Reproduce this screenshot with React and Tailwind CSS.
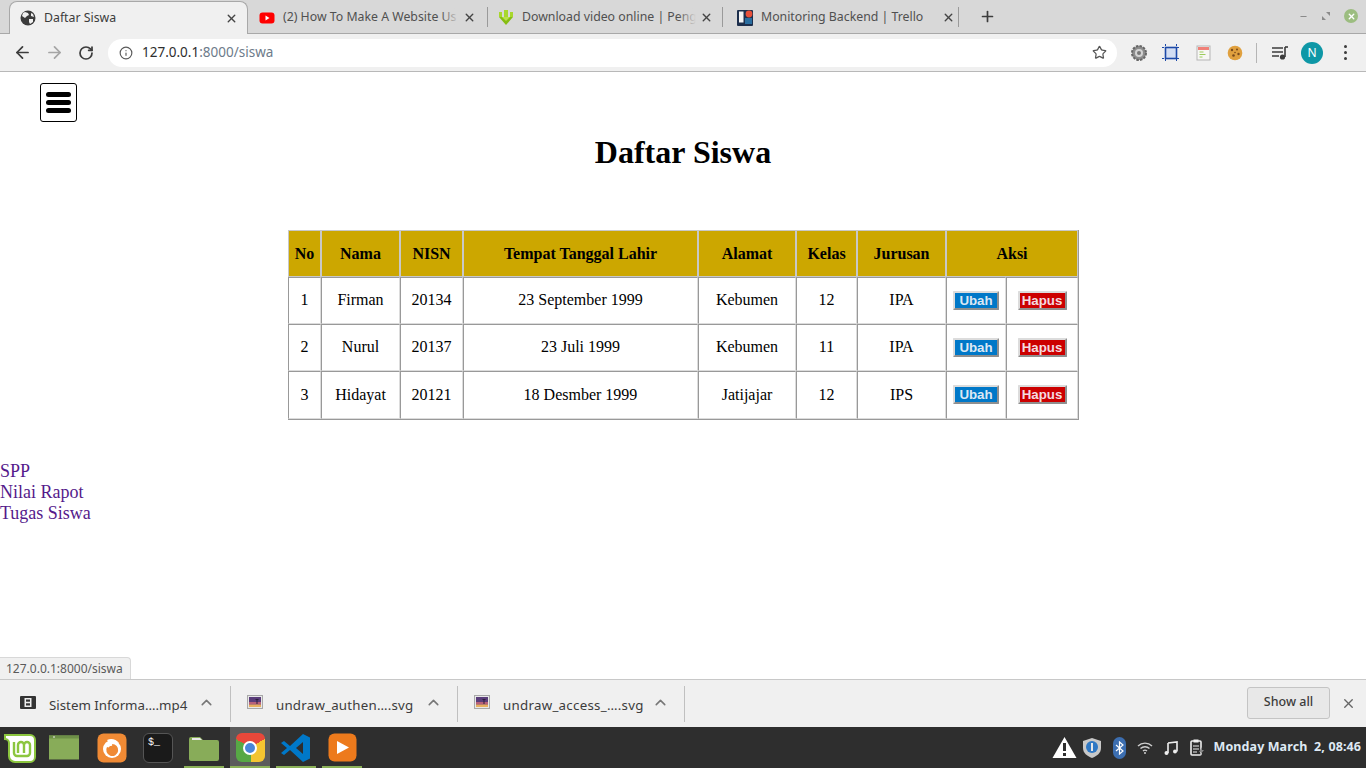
import { ArrowLeft, ArrowRight, RotateCw, Info, Star, Plus, X, ChevronUp, Minus } from 'lucide-react';

const ui = "font-['Noto_Sans','Open_Sans',sans-serif]";

const rows = [
  { no: 1, nama: 'Firman', nisn: '20134', ttl: '23 September 1999', alamat: 'Kebumen', kelas: 12, jurusan: 'IPA' },
  { no: 2, nama: 'Nurul', nisn: '20137', ttl: '23 Juli 1999', alamat: 'Kebumen', kelas: 11, jurusan: 'IPA' },
  { no: 3, nama: 'Hidayat', nisn: '20121', ttl: '18 Desmber 1999', alamat: 'Jatijajar', kelas: 12, jurusan: 'IPS' },
];

const th = 'border-l border-t border-r border-b border-[#c8c8c8] bg-[#cca700] font-bold text-center p-0';
const td = 'border-l border-t border-[#999999] border-r border-r-[#dcdcdc] border-b border-b-[#dcdcdc] text-center p-0';

function Globe() {
  return (
    <svg width="16" height="16" viewBox="0 0 16 16">
      <circle cx="8" cy="8" r="7.5" fill="#3c3c3c" />
      <path d="M5 2l3 1 1 2-2 1-2 2-3-2 1-3zM9 9l4 0 0 3-3 2-1-2zM11 3l2 1 1 3-3-1z" fill="#f0f0f0" />
    </svg>
  );
}

function YouTube() {
  return (
    <svg width="16" height="12" viewBox="0 0 16 12">
      <rect width="15" height="11" x="0.5" y="0.5" rx="3" fill="#f00" />
      <path d="M6.5 3.5l4 2.5-4 2.5z" fill="#fff" />
    </svg>
  );
}

function GreenArrow() {
  return (
    <svg width="16" height="16" viewBox="0 0 16 16">
      <path d="M1 7h14l-7 8z" fill="#86bd12" />
      <path d="M1 2h3v5H1zM6 0h4v8H6zM12 2h3v5h-3z" fill="#a8d72c" />
      <path d="M4 7h8l-4 4z" fill="#b9e24a" />
    </svg>
  );
}

function TrelloFav() {
  return (
    <svg width="16" height="16" viewBox="0 0 16 16">
      <rect width="16" height="16" rx="1" fill="#1d2f4d" />
      <rect x="2" y="1.500" width="4.500" height="11" fill="#f4f4f4" />
      <rect x="8" y="8" width="7" height="6" fill="#2a6ea0" />
      <circle cx="12" cy="4" r="3.400" fill="#e8503a" />
    </svg>
  );
}

function Tab({ icon, title, active, box, fade }) {
  return (
    <div
      className={`relative flex items-center shrink-0 h-[33px] ${box} ${
        active ? 'bg-[#f0f0f0] rounded-t-[8px] border border-b-0 border-[#a8a8a8] -mb-px z-10' : 'pt-[2px]'
      }`}
    >
      <span className="flex w-[16px] justify-center shrink-0">{icon}</span>
      <span
        className={`relative ml-[8px] flex-1 overflow-hidden whitespace-nowrap text-[12.3px] ${
          active ? 'text-[#3c3c3c]' : 'text-[#505050]'
        }`}
      >
        {title}
        {fade && <span className="absolute inset-y-0 right-0 w-[18px] bg-gradient-to-r from-transparent to-[#d8d8d8]" />}
      </span>
      <X size={13} strokeWidth={2.6} className="shrink-0 ml-[4px] text-[#444]" />
    </div>
  );
}

function Extensions() {
  return (
    <div className="flex items-center">
      <svg width="18" height="18" viewBox="0 0 18 18">
        <circle cx="9" cy="9" r="7" fill="#8d8d8d" stroke="#666" strokeWidth="2" strokeDasharray="2.5 1.2" />
        <circle cx="9" cy="9" r="4" fill="#d4d4d4" />
        <circle cx="9" cy="9" r="2" fill="#777" />
      </svg>
      <svg className="ml-[14px]" width="18" height="18" viewBox="0 0 18 18">
        <rect x="3.500" y="3.500" width="11" height="11" fill="#d3def3" stroke="#1c49a8" strokeWidth="1.600" />
        <path d="M3.500 0v18M14.500 0v18M0 3.500h18M0 14.500h18" stroke="#1c49a8" strokeWidth="1" strokeDasharray="2 1" />
      </svg>
      <svg className="ml-[16px]" width="16" height="16" viewBox="0 0 16 16">
        <rect x="1" y="1" width="13" height="14" fill="#f7f7f4" stroke="#b5b5b5" />
        <rect x="2" y="2" width="11" height="3" fill="#f08078" />
        <path d="M3.500 7h4M3.500 9.500h6M3.500 12h3" stroke="#9ccc5a" strokeWidth="1" />
      </svg>
      <svg className="ml-[15px]" width="16" height="16" viewBox="0 0 16 16">
        <circle cx="8" cy="8" r="7.300" fill="#e0a03e" />
        <circle cx="5" cy="5" r="1.200" fill="#7a4a1c" />
        <circle cx="10" cy="4.500" r="1" fill="#7a4a1c" />
        <circle cx="11.500" cy="9" r="1.200" fill="#7a4a1c" />
        <circle cx="6.500" cy="10.500" r="1.300" fill="#7a4a1c" />
        <circle cx="8" cy="7.500" r="0.800" fill="#7a4a1c" />
      </svg>
    </div>
  );
}

function Chrome() {
  return (
    <div className="flex flex-col h-[72px]">
      {/* tab strip */}
      <div className="relative flex h-[34px] items-end bg-[#d8d8d8] pl-[9px] border-b border-[#a8a8a8]">
        <Tab active box="w-[239px] pl-[10px] pr-[9px]" title="Daftar Siswa" icon={<Globe />} />
        <Tab fade box="w-[239px] pl-[11px] pr-[11px]" title="(2) How To Make A Website Us" icon={<YouTube />} />
        <div className="h-[20px] w-px bg-[#9a9a9a] mb-[6px]" />
        <Tab fade box="w-[234px] pl-[10px] pr-[9px]" title="Download video online | Peng" icon={<GreenArrow />} />
        <div className="h-[20px] w-px bg-[#9a9a9a] mb-[6px]" />
        <Tab box="w-[235px] pl-[14px] pr-[3px]" title="Monitoring Backend | Trello" icon={<TrelloFav />} />
        <div className="h-[20px] w-px bg-[#9a9a9a] mb-[6px]" />
        <Plus size={17} strokeWidth={2.4} className="ml-[20px] mb-[8px] text-[#3c3c3c]" />
        <div className="ml-auto flex items-center gap-[14px] pr-[8px] mb-[10px]">
          <Minus size={9} strokeWidth={3} className="text-[#8a8a8a]" />
          <svg width="8" height="8" viewBox="0 0 8 8">
            <path d="M4 0h4v4zM0 4l4 4H0z" fill="#8a8a8a" />
          </svg>
          <div className="w-[14px] h-[14px] rounded-full bg-[#9cbd80] flex items-center justify-center">
            <X size={9} strokeWidth={3.6} className="text-white" />
          </div>
        </div>
      </div>
      {/* toolbar */}
      <div className="flex h-[37px] items-center bg-[#f0f0f0] border-b border-[#b8b8b8] box-content">
        <ArrowLeft size={19} strokeWidth={2.2} className="ml-[13px] text-[#3c3c3c]" />
        <ArrowRight size={19} strokeWidth={2.2} className="ml-[13px] text-[#a5a5a5]" />
        <RotateCw size={16} strokeWidth={2.6} className="ml-[14px] text-[#3c3c3c]" />
        <div className="ml-[14px] flex h-[28px] w-[1009px] items-center rounded-full bg-white pl-[11px] pr-[10px]">
          <Info size={14} strokeWidth={2} className="text-[#5a5a5a]" />
          <span className="ml-[9px] text-[13.5px] text-[#2e2e2e]">
            127.0.0.1<span className="text-[#6d7b8a]">:8000/siswa</span>
          </span>
          <Star size={15} strokeWidth={2} className="ml-auto text-[#555]" />
        </div>
        <div className="ml-[13px]">
          <Extensions />
        </div>
        <div className="ml-[13px] h-[20px] w-px bg-[#b5b5b5]" />
        <svg className="ml-[15px]" width="16" height="14" viewBox="0 0 16 14">
          <path d="M0 2h11M0 6h11M0 10h7" stroke="#3c3c3c" strokeWidth="1.6" />
          <path d="M13 1v10" stroke="#3c3c3c" strokeWidth="1.6" />
          <path d="M13 1h3" stroke="#3c3c3c" strokeWidth="1.6" />
          <circle cx="10.500" cy="11" r="2.600" fill="#3c3c3c" />
        </svg>
        <div className="ml-[13px] flex h-[22px] w-[22px] items-center justify-center rounded-full bg-[#0e97a6] text-[12px] text-white">
          N
        </div>
        <div className="ml-[21px] flex flex-col gap-[3px]">
          <span className="h-[3px] w-[3px] rounded-full bg-[#3c3c3c]" />
          <span className="h-[3px] w-[3px] rounded-full bg-[#3c3c3c]" />
          <span className="h-[3px] w-[3px] rounded-full bg-[#3c3c3c]" />
        </div>
      </div>
    </div>
  );
}

function Btn({ color, children }) {
  return (
    <button
      className={`${color} inline-flex items-center justify-center border-2 border-t-[#dcdcdc] border-l-[#dcdcdc] border-r-[#8f8f8f] border-b-[#8f8f8f] rounded-[1px] font-['Liberation_Sans',sans-serif] text-[13.3px] font-bold leading-[15px] p-0 h-[19px]`}
    >
      {children}
    </button>
  );
}

function Siswa() {
  return (
    <div className="relative flex-1 bg-white font-['Liberation_Serif',serif] text-black">
      <div className="pl-[40px] pt-[11px]">
        <div className="flex h-[39px] w-[37px] flex-col items-center justify-center gap-[3px] rounded-[3px] border border-black">
          <span className="h-[5px] w-[25px] rounded-full bg-black" />
          <span className="h-[5px] w-[25px] rounded-full bg-black" />
          <span className="h-[5px] w-[25px] rounded-full bg-black" />
        </div>
      </div>
      <h1 className="mt-[12px] text-center text-[32px] font-bold leading-[37px]">Daftar Siswa</h1>

      <table className="ml-[288px] mt-[59px] w-[791px] table-fixed border-separate border-spacing-0 border-r border-b border-[#999999] text-[16px] leading-[18px]">
        <colgroup>
          <col className="w-[33px]" />
          <col className="w-[79px]" />
          <col className="w-[63px]" />
          <col className="w-[235px]" />
          <col className="w-[98px]" />
          <col className="w-[61px]" />
          <col className="w-[89px]" />
          <col className="w-[60px]" />
          <col className="w-[72px]" />
        </colgroup>
        <thead>
          <tr className="h-[47px]">
            <th className={th}>No</th>
            <th className={th}>Nama</th>
            <th className={th}>NISN</th>
            <th className={th}>Tempat Tanggal Lahir</th>
            <th className={th}>Alamat</th>
            <th className={th}>Kelas</th>
            <th className={th}>Jurusan</th>
            <th className={th} colSpan={2}>Aksi</th>
          </tr>
        </thead>
        <tbody>
          {rows.map((r) => {
            const last = r.no === 3;
            const text = last ? td : `${td} pb-[2px]`;
            const action = last ? `${td} pb-[2px]` : td;
            return (
              <tr key={r.no} className={last ? 'h-[48px]' : 'h-[47px]'}>
                <td className={text}>{r.no}</td>
                <td className={text}>{r.nama}</td>
                <td className={text}>{r.nisn}</td>
                <td className={text}>{r.ttl}</td>
                <td className={text}>{r.alamat}</td>
                <td className={text}>{r.kelas}</td>
                <td className={text}>{r.jurusan}</td>
                <td className={action}>
                  <Btn color="w-[46px] bg-[#0078c8] text-[#dce8f4]">Ubah</Btn>
                </td>
                <td className={action}>
                  <Btn color="w-[49px] bg-[#cc0000] text-[#f4dce0]">Hapus</Btn>
                </td>
              </tr>
            );
          })}
        </tbody>
      </table>

      <ul className="mt-[41px] text-[18px] leading-[21px] text-[#551a8b]">
        <li>SPP</li>
        <li>Nilai Rapot</li>
        <li>Tugas Siswa</li>
      </ul>

      <div className={`${ui} absolute bottom-0 left-0 h-[22px] w-[131px] rounded-tr-[4px] border-t border-r border-[#d8d8d8] bg-[#f0f0f0] pl-[6px] text-[12px] leading-[21px] text-[#5a5a5a]`}>
        127.0.0.1:8000/siswa
      </div>
    </div>
  );
}

function FileThumb() {
  return (
    <svg width="16" height="14" viewBox="0 0 16 14">
      <rect x="0.500" y="0.500" width="15" height="13" fill="#e8e8e8" stroke="#a8a8a8" />
      <rect x="2" y="2" width="12" height="10" fill="#5a3d7a" />
      <rect x="2" y="7" width="12" height="2.500" fill="#b8607a" />
      <rect x="2" y="9.500" width="12" height="2.500" fill="#e8b060" />
      <path d="M10 9V4M8.500 4.500h3" stroke="#2a1f3a" strokeWidth="1" />
    </svg>
  );
}

function FilmThumb() {
  return (
    <svg width="16" height="13" viewBox="0 0 16 13">
      <rect width="16" height="13" rx="1" fill="#333" />
      <rect x="4.500" y="2" width="7" height="9" fill="#eee" />
      <rect x="6" y="3.500" width="4" height="2.200" fill="#333" />
      <rect x="6" y="7.300" width="4" height="2.200" fill="#333" />
    </svg>
  );
}

function DownloadItem({ icon, name, width, iconBox, nameClass }) {
  return (
    <div className={`flex h-[36px] shrink-0 items-center border-r border-[#c0c0c0] ${width}`}>
      <span className={`${iconBox} -mt-[3px] flex w-[16px] justify-center`}>{icon}</span>
      <span className={`ml-[13px] mt-[5px] whitespace-nowrap text-[13.3px] text-[#3c3c3c] ${nameClass}`}>{name}</span>
      <ChevronUp size={17} strokeWidth={2.2} className="ml-auto mr-[15px] -mt-[2px] text-[#777]" />
    </div>
  );
}

function DownloadBar() {
  return (
    <div className="flex h-[48px] items-center border-t border-[#c8c8c8] bg-[#f0f0f0]">
      <DownloadItem width="w-[231px]" iconBox="ml-[20px]" nameClass="" name="Sistem Informa….mp4" icon={<FilmThumb />} />
      <DownloadItem width="w-[227px]" iconBox="ml-[16px]" nameClass="tracking-[0.22px]" name="undraw_authen….svg" icon={<FileThumb />} />
      <DownloadItem width="w-[227px]" iconBox="ml-[16px]" nameClass="tracking-[0.28px]" name="undraw_access_….svg" icon={<FileThumb />} />
      <button className="ml-auto mb-[2px] flex h-[32px] w-[83px] items-center justify-center rounded-[3px] border border-[#c4c4c4] bg-[#e8e8e8] text-[12.500px] font-medium text-[#3c3c3c]">
        Show all
      </button>
      <X size={15} strokeWidth={2.2} className="ml-[11px] mr-[10px] text-[#666]" />
    </div>
  );
}

function Launcher({ children, active, running }) {
  return (
    <div className={`relative flex h-[41px] w-[40px] shrink-0 items-center justify-center ${active ? 'bg-[#5b5b5b]' : ''}`}>
      {children}
      {running && <span className="absolute bottom-0 left-0 right-0 h-[2px] bg-[#8bb158]" />}
    </div>
  );
}

function Taskbar() {
  return (
    <div className="flex h-[41px] items-center bg-[#2e2e2e] text-white">
      <div className="ml-[4px] w-[34px]">
        <svg width="33" height="30" viewBox="0 0 33 30">
          <path d="M1 2h25a5 5 0 0 1 5 5v17a5 5 0 0 1-5 5H11a6 6 0 0 1-6-6V10a4 4 0 0 0-4-4z" fill="#fff" stroke="#8cc63f" strokeWidth="2" />
          <path d="M10 9v11a3 3 0 0 0 3 3h10a3 3 0 0 0 3-3v-8a3 3 0 0 0-6 0v8m0-8a3 3 0 0 0-6 0v8" fill="none" stroke="#8cc63f" strokeWidth="2.400" />
        </svg>
      </div>
      <div className="ml-[6px]">
        <Launcher>
          <svg width="31" height="25" viewBox="0 0 31 25">
            <rect width="30" height="24" y="0.500" fill="#88ac59" />
            <rect width="30" height="3" y="0.500" fill="#6d8f47" />
            <rect x="4" y="1.500" width="2" height="1" fill="#eee" />
          </svg>
        </Launcher>
      </div>
      <div className="ml-[8px]">
        <Launcher>
          <svg width="30" height="30" viewBox="0 0 30 30">
            <rect width="29" height="29" x="0.500" y="0.500" rx="6" fill="#f08a34" />
            <circle cx="15" cy="16" r="9" fill="#fff" />
            <path d="M15 11a6 6 0 1 1-5 3c2 1 2 0 3-1 1 0 3 0 2-2z" fill="#f08a34" />
            <path d="M10 7c4-2 9-1 12 3-3-1-5-1-7 0-2 0-4-1-5-3z" fill="#fff" />
          </svg>
        </Launcher>
      </div>
      <div className="ml-[6px]">
        <Launcher>
          <div className="flex h-[30px] w-[30px] items-start rounded-[6px] border border-[#555] bg-[#1a1a1a] pl-[4px] pt-[2px] font-['Liberation_Mono',monospace] text-[10px] leading-[14px] text-white">
            $_
          </div>
        </Launcher>
      </div>
      <div className="ml-[6px]">
        <Launcher running>
          <svg width="30" height="26" viewBox="0 0 30 26">
            <path d="M0 4a2 2 0 0 1 2-2h9l3 3h14a2 2 0 0 1 2 2v17a2 2 0 0 1-2 2H2a2 2 0 0 1-2-2z" fill="#88ac59" />
            <path d="M3 3h8l2 2H3z" fill="#e8e8e8" />
          </svg>
        </Launcher>
      </div>
      <div className="ml-[6px]">
        <Launcher active running>
          <div className="flex h-[29px] w-[29px] items-center justify-center rounded-[6px] bg-[conic-gradient(from_-60deg,#e8483a_0_33%,#f4c430_33%_66%,#57a845_66%_100%)]">
            <div className="h-[14px] w-[14px] rounded-full border-2 border-white bg-[#4a86d8]" />
          </div>
        </Launcher>
      </div>
      <div className="ml-[6px]">
        <Launcher running>
          <svg width="30" height="30" viewBox="0 0 30 30">
            <path d="M22 1l7 3.500v21L22 29 9 17l-6 5-3-2 6-5-6-5 3-2 6 5z" fill="#0078c8" />
            <path d="M22 9l-7 6 7 6z" fill="#2e2e2e" />
          </svg>
        </Launcher>
      </div>
      <div className="ml-[6px]">
        <Launcher running>
          <svg width="29" height="29" viewBox="0 0 29 29">
            <rect width="28" height="28" x="0.500" y="0.500" rx="6" fill="#ed7a1c" />
            <path d="M9 8l12 6.500L9 21z" fill="#fff" />
          </svg>
        </Launcher>
      </div>

      <div className="ml-auto flex items-center pr-[5px]">
        <svg width="25" height="23" viewBox="0 0 25 23">
          <path d="M12.500 1l12 21H.5z" fill="#fff" />
          <path d="M11 7h3v8h-3zM11 17h3v3h-3z" fill="#2e2e2e" />
        </svg>
        <svg className="ml-[6px]" width="18" height="20" viewBox="0 0 18 20">
          <path d="M9 0l9 3v7c0 5-4 8-9 10-5-2-9-5-9-10V3z" fill="#c8c8c8" />
          <circle cx="9" cy="9" r="6" fill="#2f78c4" />
          <rect x="8" y="5" width="2" height="8" fill="#e8e8e8" />
        </svg>
        <div className="ml-[12px] flex h-[22px] w-[13px] items-center justify-center rounded-full bg-[#3c6eb0]">
          <svg width="9" height="14" viewBox="0 0 9 14">
            <path d="M1 4l7 6-3.500 3V1L8 4 1 10" fill="none" stroke="#fff" strokeWidth="1.200" />
          </svg>
        </div>
        <svg className="ml-[11px]" width="16" height="12" viewBox="0 0 16 12">
          <path d="M1 4a10 10 0 0 1 14 0M3.500 6.500a6.500 6.500 0 0 1 9 0M6 9a3 3 0 0 1 4 0" fill="none" stroke="#cfcfcf" strokeWidth="1.400" />
          <circle cx="8" cy="11" r="1" fill="#cfcfcf" />
        </svg>
        <svg className="ml-[11px]" width="14" height="14" viewBox="0 0 14 14">
          <path d="M4 2l9-1v9.500M4 2v10" fill="none" stroke="#eee" strokeWidth="1.600" />
          <circle cx="2.500" cy="12" r="2" fill="#eee" />
          <circle cx="11" cy="10.500" r="2" fill="#eee" />
        </svg>
        <svg className="ml-[12px]" width="15" height="17" viewBox="0 0 15 17">
          <rect x="1" y="2" width="10" height="14" rx="1" fill="none" stroke="#eee" strokeWidth="1.600" />
          <rect x="3.500" y="0.500" width="5" height="3" fill="#eee" />
          <path d="M3 7h6M3 10h6M3 13h4" stroke="#eee" strokeWidth="1.200" />
          <path d="M12 8l-3 5h2l-1 3 4-5h-2z" fill="#888" />
        </svg>
        <span className="ml-[9px] whitespace-pre text-[12.500px] font-bold tracking-[0.1px] text-[#dfe9f4]">Monday March  2, 08:46</span>
      </div>
    </div>
  );
}

export default function App() {
  return (
    <div className={`${ui} flex h-[768px] w-[1366px] flex-col overflow-hidden`}>
      <Chrome />
      <Siswa />
      <DownloadBar />
      <Taskbar />
    </div>
  );
}
